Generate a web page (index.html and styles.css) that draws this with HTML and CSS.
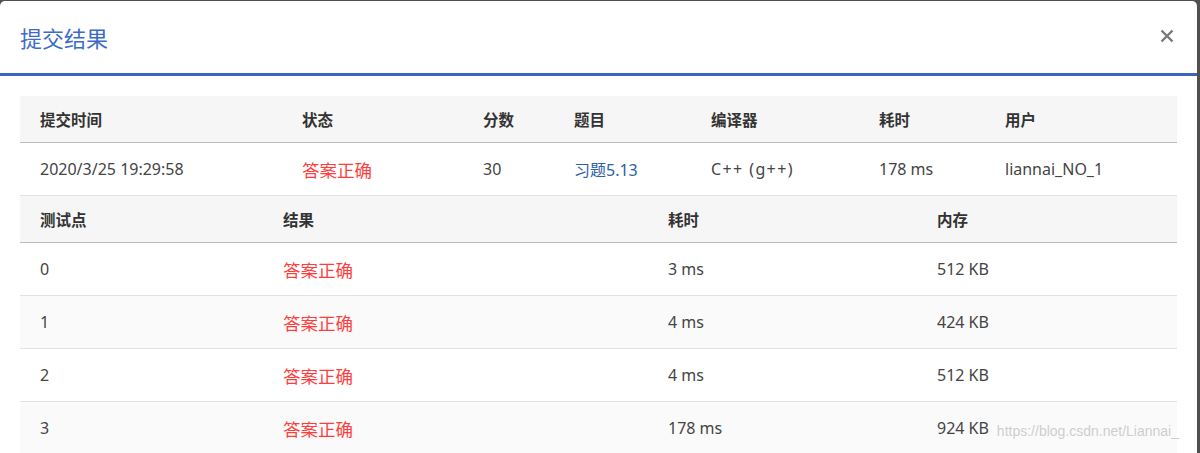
FILE: index.html
```html
<!DOCTYPE html>
<html lang="zh-CN">
<head>
<meta charset="UTF-8">
<title>提交结果</title>
<link rel="stylesheet" href="styles.css">
</head>
<body>
<section class="modal">
	<header class="modalHead">
		<h2 class="title">提交结果</h2>
		<a href="javascript:;" class="close">
			<svg width="14" height="14" viewBox="0 0 14 14"><path d="M1.5 1.5 L12.5 12.5 M12.5 1.5 L1.5 12.5" stroke="#7a7a7a" stroke-width="2.4" fill="none"/></svg>
		</a>
	</header>
	<div class="modalBody">
		<table class="result">
			<colgroup>
				<col style="width:262px"><col style="width:181px"><col style="width:91px"><col style="width:137px"><col style="width:168px"><col style="width:126px"><col>
			</colgroup>
			<tr class="head">
				<th>提交时间</th><th>状态</th><th>分数</th><th>题目</th><th>编译器</th><th>耗时</th><th>用户</th>
			</tr>
			<tr>
				<td>2020/3/25 19:29:58</td>
				<td class="ok">答案正确</td>
				<td>30</td>
				<td><a href="javascript:;">习题5.13</a></td>
				<td class="lang">C++ (g++)</td>
				<td>178 ms</td>
				<td>liannai_NO_1</td>
			</tr>
		</table>
		<table class="result cases">
			<colgroup>
				<col style="width:243px"><col style="width:385px"><col style="width:269px"><col>
			</colgroup>
			<tr class="head">
				<th>测试点</th><th>结果</th><th>耗时</th><th>内存</th>
			</tr>
			<tr><td>0</td><td class="ok">答案正确</td><td>3 ms</td><td>512 KB</td></tr>
			<tr><td>1</td><td class="ok">答案正确</td><td>4 ms</td><td>424 KB</td></tr>
			<tr><td>2</td><td class="ok">答案正确</td><td>4 ms</td><td>512 KB</td></tr>
			<tr><td>3</td><td class="ok">答案正确</td><td>178 ms</td><td>924 KB</td></tr>
		</table>
	</div>
	<span class="mark">https://blog.csdn.net/Liannai_</span>
</section>
</body>
</html>
```
FILE: styles.css
```css
html,
body {
	margin: 0;
	height: 100%;
	overflow: hidden;
}
body {
	background: #505050;
	font: 16px "Noto Sans", "Noto Sans CJK SC", sans-serif;
	color: #333;
}
h2 {
	margin: 0;
}
a {
	text-decoration: none;
}
.modal {
	position: relative;
	margin: 1px 3px 0 0;
	height: 452px;
	background: #fff;
	border-radius: 5px 5px 0 0;
	overflow: hidden;
}
.modalHead {
	display: flex;
	align-items: center;
	justify-content: space-between;
	height: 72px;
	padding: 0 23px 0 20px;
	border-bottom: 3px solid #3a66c0;
}
.title {
	font: 400 22px/1 "Noto Sans CJK SC", sans-serif;
	color: #3d6bc8;
	margin-top: -1px;
}
.close {
	display: flex;
	margin-top: -3px;
}
.modalBody {
	padding: 20px 20px 0;
}
.result {
	width: 1157px;
	border-collapse: collapse;
	table-layout: fixed;
}
.result th,
.result td {
	padding: 0 0 0 20px;
	text-align: left;
	white-space: nowrap;
}
.result .head {
	background: #f6f6f6;
}
.result th {
	height: 46px;
	font-size: 15.5px;
	font-weight: 600;
	color: #333;
	border-bottom: 1px solid #bbb;
}
.result td {
	height: 52px;
	color: #444;
	border-bottom: 1px solid #e2e2e2;
}
.result td.ok {
	font-size: 17.5px;
	color: #ff3d3d;
}
.result td.lang {
	letter-spacing: 1.4px;
}
.result td a {
	color: #2c60a8;
}
.cases tr:nth-child(odd) td {
	background: #fafafa;
}
.mark {
	position: absolute;
	right: 18px;
	bottom: 14px;
	font: 14px "Liberation Sans", sans-serif;
	color: rgba(185, 185, 185, .7);
}
```
